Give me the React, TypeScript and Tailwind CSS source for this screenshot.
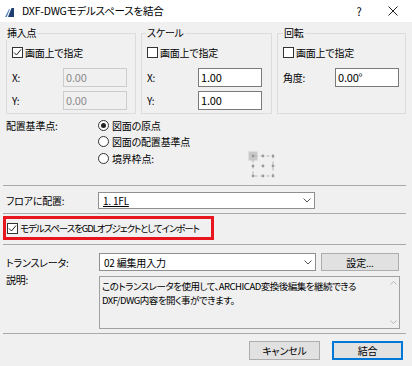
import React from 'react';

const Check = ({ on }: { on?: boolean }) => (
  <span className="w-[11px] h-[11px] border border-[#333333] bg-white flex items-center justify-center shrink-0">
    {on && (
      <svg width="9" height="9" viewBox="0 0 9 9">
        <path d="M1 4.5 L3.5 7 L8 1.5" fill="none" stroke="#222" strokeWidth="1" />
      </svg>
    )}
  </span>
);

const Radio = ({ on }: { on?: boolean }) => (
  <span className="w-[11px] h-[11px] rounded-full border border-[#333333] bg-white flex items-center justify-center shrink-0">
    {on && <span className="w-[5px] h-[5px] rounded-full bg-[#222222]" />}
  </span>
);

const Input = ({ value, disabled }: { value: string; disabled?: boolean }) => (
  <div
    className={
      disabled
        ? 'w-[64px] h-[19px] border border-[#cccccc] bg-[#f0f0f0] text-[#8d8d8d] flex items-center px-[2px] text-[11px]'
        : 'w-[64px] h-[19px] border border-[#7a7a7a] bg-white text-black flex items-center px-[2px] text-[11px]'
    }
  >
    {value}
  </div>
);

const Chevron = () => (
  <svg width="8" height="5" viewBox="0 0 8 5" className="shrink-0">
    <path d="M0.5 0.5 L4 4 L7.5 0.5" fill="none" stroke="#555" strokeWidth="1" />
  </svg>
);

const Sep = () => <div className="h-px w-[403px] -ml-[3px] bg-[#a9a9a9]" />;

const Anchor = () => (
  <svg width="30" height="30" viewBox="0 0 30 30" className="mt-[1px] shrink-0">
    <rect x="0.5" y="0.5" width="9" height="9" fill="#c9c9c9" />
    <rect x="5" y="5" width="20" height="20" fill="none" stroke="#b4b4b4" strokeWidth="1" strokeDasharray="3 3" strokeDashoffset="-1.5" />
    {[5, 15, 25].map((y) =>
      [5, 15, 25].map((x) => <circle key={`${x}-${y}`} cx={x} cy={y} r="1.4" fill="#9a9a9a" />)
    )}
  </svg>
);

export default function App() {
  return (
    <div className="w-[412px] h-[366px] overflow-hidden bg-[#f0f0f0] text-black text-[10px] tracking-[-0.2px] font-['Noto_Sans_CJK_JP','Noto_Sans',sans-serif] [font-feature-settings:'palt']">
      {/* title bar */}
      <div className="h-[22px] bg-white flex items-center pl-[5px]">
        <svg width="9" height="9" viewBox="0 0 9 9" className="mt-[3px] shrink-0">
          <polygon points="3,9 6.5,0 9,0 9,9" fill="#1e3d70" />
          <polygon points="0,9 4,1 5,1 1.8,9" fill="#5b86c4" />
        </svg>
        <span className="ml-[8px] text-[10.5px] leading-[14px] whitespace-nowrap">DXF-DWGモデルスペースを結合</span>
        <span className="ml-auto text-[11px] w-[12px] text-center mr-[23px]">?</span>
        <svg width="10" height="10" viewBox="0 0 10 10" className="mr-[14px]">
          <path d="M0.5 0.5 L9.5 9.5 M9.5 0.5 L0.5 9.5" stroke="#222" strokeWidth="1" />
        </svg>
      </div>

      <div className="px-[6px]">
        {/* groups */}
        <div className="mt-[4px] flex gap-[5px]">
          <fieldset className="w-[131px] border border-[#dcdcdc] px-[5px] pb-[3px]">
            <legend className="-ml-[6px] px-[1px] leading-[14px]">挿入点</legend>
            <div className="mt-[5px] h-[14px] flex items-center gap-[2px]">
              <Check on />
              <span>画面上で指定</span>
            </div>
            <div className="mt-[9px] flex items-center">
              <span className="w-[51px]">X:</span>
              <Input value="0.00" disabled />
            </div>
            <div className="mt-[4px] flex items-center">
              <span className="w-[51px]">Y:</span>
              <Input value="0.00" disabled />
            </div>
          </fieldset>

          <fieldset className="w-[132px] border border-[#dcdcdc] px-[5px] pb-[3px]">
            <legend className="-ml-[1px] px-[1px] leading-[14px]">スケール</legend>
            <div className="mt-[5px] h-[14px] flex items-center gap-[2px]">
              <Check />
              <span>画面上で指定</span>
            </div>
            <div className="mt-[9px] flex items-center">
              <span className="w-[51px]">X:</span>
              <Input value="1.00" />
            </div>
            <div className="mt-[4px] flex items-center">
              <span className="w-[51px]">Y:</span>
              <Input value="1.00" />
            </div>
          </fieldset>

          <fieldset className="w-[130px] border border-[#dcdcdc] px-[5px] pb-[3px]">
            <legend className="px-[1px] leading-[14px]">回転</legend>
            <div className="mt-[5px] h-[14px] flex items-center gap-[2px]">
              <Check />
              <span>画面上で指定</span>
            </div>
            <div className="mt-[9px] flex items-center">
              <span className="w-[52px]">角度:</span>
              <Input value="0.00°" />
            </div>
          </fieldset>
        </div>

        {/* placement reference */}
        <div className="mt-[3px] flex">
          <div className="w-[92px] h-[16px] flex items-center">配置基準点:</div>
          <div className="flex flex-col">
            <div className="h-[16px] flex items-center gap-[3px]">
              <Radio on />
              <span>図面の原点</span>
            </div>
            <div className="h-[17px] flex items-center gap-[3px]">
              <Radio />
              <span>図面の配置基準点</span>
            </div>
            <div className="flex items-start">
              <div className="w-[150px] h-[17px] flex items-center gap-[3px]">
                <Radio />
                <span>境界枠点:</span>
              </div>
              <Anchor />
            </div>
          </div>
        </div>

        <div className="mt-[4px]">
          <Sep />
        </div>

        {/* floor */}
        <div className="mt-[6px] flex items-center h-[17px]">
          <div className="w-[92px]">フロアに配置:</div>
          <div className="w-[217px] h-[17px] bg-white border border-[#8f8f8f] flex items-center pl-[4px] pr-[3px]">
            <span className="underline flex-1">1. 1FL</span>
            <Chevron />
          </div>
        </div>

        <div className="mt-[4px]">
          <Sep />
        </div>

        {/* import as GDL */}
        <div className="mt-[2px] -ml-[3px] w-[211px] h-[24px] border-[3px] border-[#e8141e] flex items-center pl-[1px] gap-[2px]">
          <Check on />
          <span className="whitespace-nowrap text-[9.5px] tracking-[-1.1px]">モデルスペースをGDLオブジェクトとしてインポート</span>
        </div>

        <div className="mt-[4px]">
          <Sep />
        </div>

        {/* translator */}
        <div className="mt-[8px] flex items-center h-[18px]">
          <div className="w-[93px] whitespace-nowrap">トランスレータ:</div>
          <div className="w-[217px] h-[18px] bg-white border border-[#8f8f8f] flex items-center pl-[4px] pr-[3px]">
            <span className="flex-1">02 編集用入力</span>
            <Chevron />
          </div>
          <button className="ml-[5px] w-[78px] h-[18px] bg-[#e1e1e1] border border-[#adadad] flex items-center justify-center">
            設定...
          </button>
        </div>

        <div className="mt-[5px] flex items-start">
          <div className="w-[93px] -mt-[2px] leading-[12px]">説明:</div>
          <div className="w-[301px] h-[53px] border border-[#a0a0a0] bg-[#f0f0f0] flex">
            <div className="flex-1 pl-[2px] pt-[2px] leading-[14px] text-[9.5px] tracking-[-0.5px] whitespace-nowrap">
              <div>このトランスレータを使用して、ARCHICAD変換後編集を継続できる</div>
              <div>DXF/DWG内容を開く事ができます。</div>
            </div>
            <div className="w-[12px] flex flex-col items-center justify-between py-[4px]">
              <svg width="7" height="4" viewBox="0 0 7 4">
                <path d="M0.5 3.5 L3.5 0.5 L6.5 3.5" fill="none" stroke="#b8b8b8" strokeWidth="1" />
              </svg>
              <svg width="7" height="4" viewBox="0 0 7 4">
                <path d="M0.5 0.5 L3.5 3.5 L6.5 0.5" fill="none" stroke="#b8b8b8" strokeWidth="1" />
              </svg>
            </div>
          </div>
        </div>

        <div className="mt-[4px]">
          <Sep />
        </div>

        {/* buttons */}
        <div className="mt-[7px] flex justify-end gap-[12px] pr-[3px]">
          <button className="w-[71px] h-[19px] bg-[#e1e1e1] border border-[#adadad] flex items-center justify-center">
            キャンセル
          </button>
          <button className="w-[71px] h-[19px] bg-[#e1e1e1] border-2 border-[#0078d7] flex items-center justify-center">
            結合
          </button>
        </div>
      </div>
    </div>
  );
}
